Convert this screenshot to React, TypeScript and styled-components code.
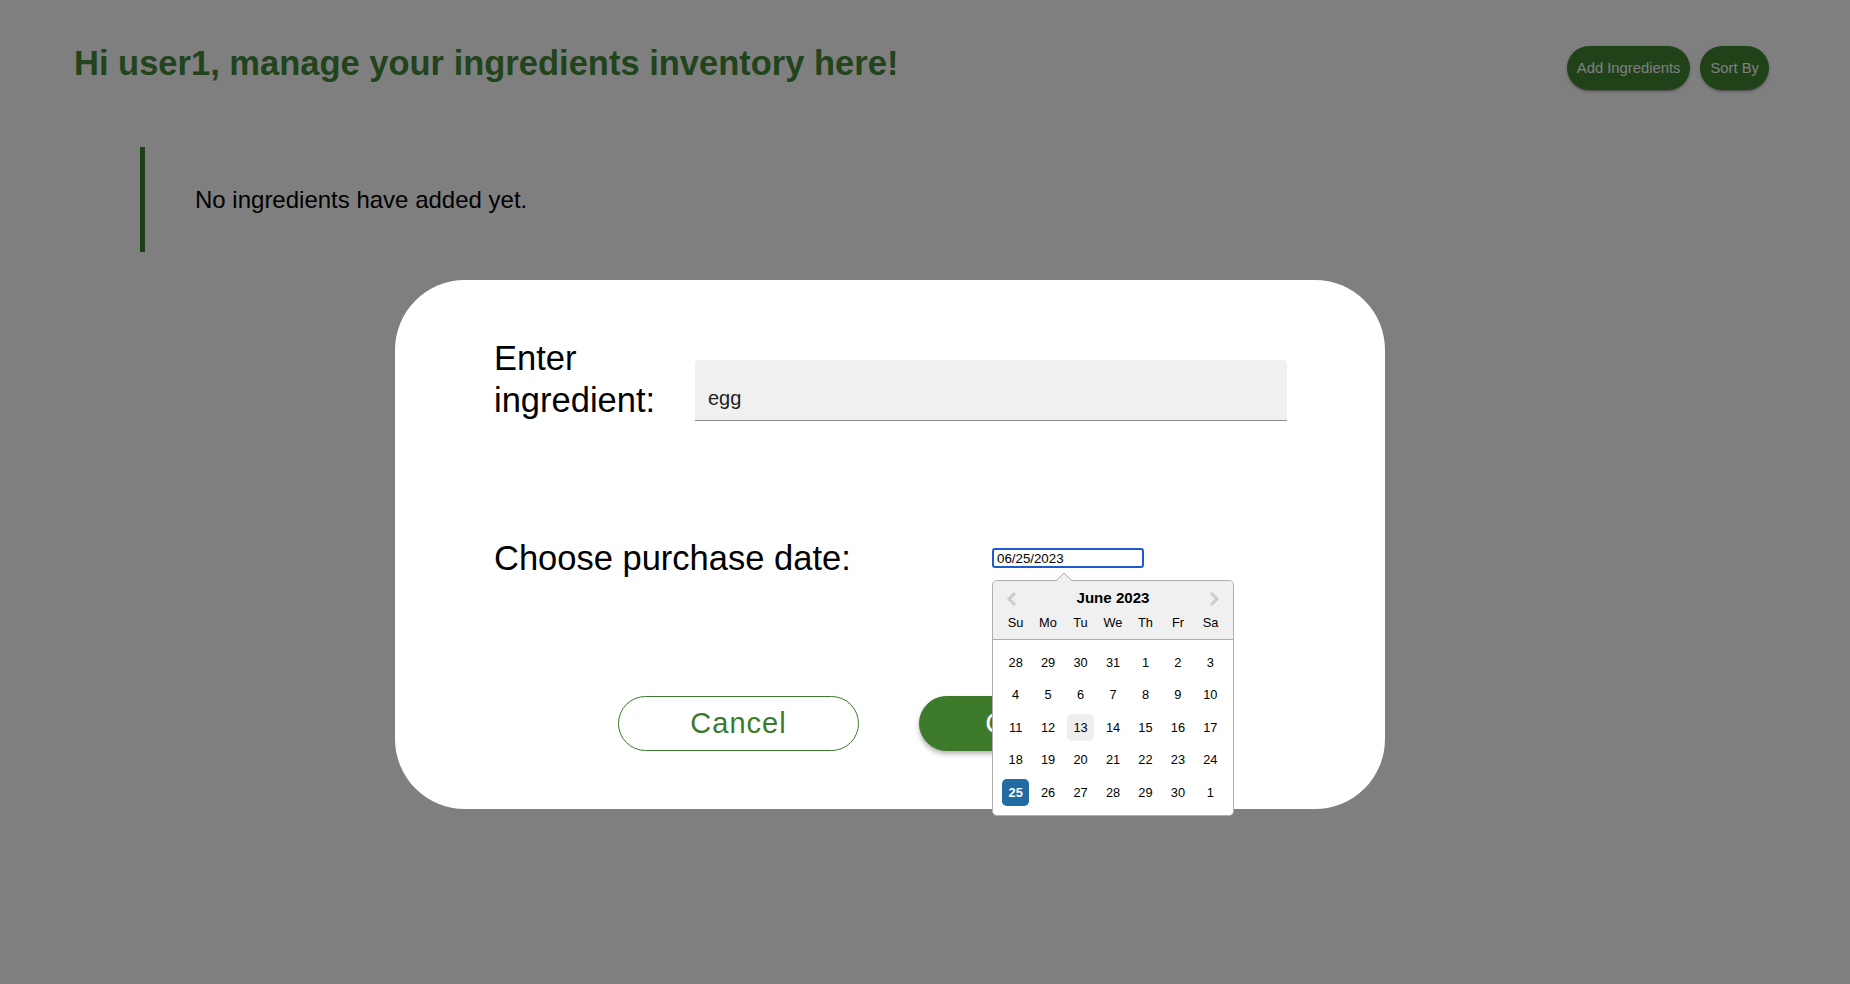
import React from 'react';
import styled, { createGlobalStyle } from 'styled-components';

const GREEN = '#3d7b2a';

const GlobalStyle = createGlobalStyle`
  html, body {
    margin: 0;
    padding: 0;
    background: #ffffff;
  }
  body {
    font-family: "Liberation Sans", Arial, sans-serif;
  }
`;

const Page = styled.div`
  min-height: 984px;
`;

const Header = styled.header`
  display: flex;
  justify-content: space-between;
  align-items: flex-start;
  padding: 43px 81px 0 74px;
`;

const Greeting = styled.h1`
  margin: 0;
  font-size: 34.5px;
  line-height: 40px;
  font-weight: 700;
  color: #44883a;
`;

const HeaderActions = styled.div`
  display: flex;
  gap: 10px;
  margin-top: 3px;
`;

const PillButton = styled.button`
  height: 44px;
  padding: 0 10px;
  border: none;
  border-radius: 22px;
  background: #3e8432;
  color: #ffffff;
  font-family: "Liberation Sans", Arial, sans-serif;
  font-size: 14.8px;
  box-shadow: 0 3px 1px -2px rgba(0, 0, 0, 0.2), 0 2px 2px rgba(0, 0, 0, 0.14), 0 1px 5px rgba(0, 0, 0, 0.12);
  cursor: pointer;
`;

const EmptyNote = styled.blockquote`
  margin: 57px 0 0 140px;
  height: 105px;
  border-left: 5px solid #3d8031;
  padding-left: 50px;
  display: flex;
  align-items: center;
  font-size: 24px;
  color: #000000;
`;

// backdrop of the dialog
const Backdrop = styled.div`
  position: fixed;
  inset: 0;
  background: rgba(0, 0, 0, 0.5);
  display: flex;
  align-items: flex-start;
  padding: 280px 0 0 395px;
`;

const Dialog = styled.div`
  width: 990px;
  height: 529px;
  box-sizing: border-box;
  background: #ffffff;
  border-radius: 70px;
  padding: 57px 98px 58px 99px;
  display: flex;
  flex-direction: column;
`;

const FieldRow = styled.div<{ $align: string; $gap: number }>`
  display: flex;
  align-items: ${p => p.$align};
  margin-top: ${p => p.$gap}px;
`;

const FieldLabel = styled.label<{ $width: number }>`
  flex: 0 0 ${p => p.$width}px;
  font-size: 34.5px;
  line-height: 42px;
  color: #000000;
`;

const TextInput = styled.input`
  width: 592px;
  height: 61px;
  box-sizing: border-box;
  border: none;
  border-bottom: 1px solid #8c8c8c;
  border-radius: 4px 4px 0 0;
  background: #f0f0f0;
  padding: 26px 12px 10px 13px;
  font-family: "Liberation Sans", Arial, sans-serif;
  font-size: 20px;
  color: #222222;
  outline: none;
`;

const DateField = styled.div`
  position: relative;
`;

const DateInput = styled.input`
  width: 152px;
  height: 20px;
  box-sizing: border-box;
  border: 2px solid #1f5bcc;
  border-radius: 3px;
  padding: 0 3px;
  font-family: "Liberation Sans", Arial, sans-serif;
  font-size: 13.3px;
  color: #000000;
  outline: none;
`;

const Popper = styled.div`
  position: absolute;
  top: 32px;
  left: 0;
  width: 242px;
  box-sizing: border-box;
  background: #ffffff;
  border: 1px solid #aeaeae;
  border-radius: 4.8px;
  font-size: 12.8px;
  color: #000000;
  z-index: 2;
`;

const PopperArrow = styled.svg`
  position: absolute;
  top: -9px;
  left: 62px;
`;

const CalHeader = styled.div`
  position: relative;
  background: #f0f0f0;
  border-bottom: 1px solid #aeaeae;
  border-radius: 4.8px 4.8px 0 0;
  padding: 8px 0;
  text-align: center;
`;

const MonthTitle = styled.div`
  font-size: 15.1px;
  font-weight: 700;
  line-height: 17.4px;
`;

const NavButton = styled.button<{ $side: 'left' | 'right' }>`
  position: absolute;
  top: 2px;
  ${p => p.$side}: 3px;
  width: 32px;
  height: 32px;
  padding: 0;
  border: none;
  background: none;
  display: flex;
  align-items: center;
  justify-content: center;
  cursor: pointer;
`;

const Week = styled.div<{ $header?: boolean }>`
  display: flex;
  justify-content: center;
  margin-bottom: ${p => (p.$header ? '-8px' : '0')};
`;

const Month = styled.div`
  margin: 6.4px;
`;

const Cell = styled.div<{ $state?: 'selected' | 'keyboard' }>`
  width: 27.2px;
  height: 27.2px;
  line-height: 27.2px;
  margin: 2.66px;
  text-align: center;
  border-radius: 4.8px;
  background: ${p => (p.$state === 'selected' ? '#216ba5' : p.$state === 'keyboard' ? '#eeeeee' : 'transparent')};
  color: ${p => (p.$state === 'selected' ? '#ffffff' : '#000000')};
  font-weight: ${p => (p.$state === 'selected' ? 700 : 400)};
`;

const ButtonRow = styled.div`
  display: flex;
  justify-content: center;
  gap: 60px;
  margin-top: 117px;
  padding-right: 3px;
`;

const DialogButton = styled.button<{ $filled?: boolean }>`
  width: 241px;
  height: 55px;
  border-radius: 28px;
  border: 1px solid ${GREEN};
  background: ${p => (p.$filled ? GREEN : '#ffffff')};
  color: ${p => (p.$filled ? '#ffffff' : GREEN)};
  box-shadow: ${p => (p.$filled ? '0 3px 5px rgba(0, 0, 0, 0.3)' : 'none')};
  font-family: "Liberation Sans", Arial, sans-serif;
  font-size: 29px;
  letter-spacing: 1px;
  cursor: pointer;
`;

const dayNames = ['Su', 'Mo', 'Tu', 'We', 'Th', 'Fr', 'Sa'];
const weeks = [
  [28, 29, 30, 31, 1, 2, 3],
  [4, 5, 6, 7, 8, 9, 10],
  [11, 12, 13, 14, 15, 16, 17],
  [18, 19, 20, 21, 22, 23, 24],
  [25, 26, 27, 28, 29, 30, 1],
];

const Chevron = ({ dir }: { dir: 'left' | 'right' }) => (
  <svg width="12" height="16" viewBox="0 0 12 16">
    <polyline
      points={dir === 'left' ? '9,2 3,8 9,14' : '3,2 9,8 3,14'}
      fill="none"
      stroke="#cccccc"
      strokeWidth="3"
    />
  </svg>
);

const Calendar: React.FC = () => (
  <Popper>
    <PopperArrow width="18" height="10" viewBox="0 0 18 10">
      <polygon points="0,10 9,1 18,10" fill="#f0f0f0" />
      <polyline points="0,10 9,1 18,10" fill="none" stroke="#aeaeae" strokeWidth="1" />
    </PopperArrow>
    <CalHeader>
      <NavButton $side="left" aria-label="Previous Month">
        <Chevron dir="left" />
      </NavButton>
      <MonthTitle>June 2023</MonthTitle>
      <NavButton $side="right" aria-label="Next Month">
        <Chevron dir="right" />
      </NavButton>
      <Week $header>
        {dayNames.map(d => (
          <Cell key={d}>{d}</Cell>
        ))}
      </Week>
    </CalHeader>
    <Month>
      {weeks.map((week, wi) => (
        <Week key={wi}>
          {week.map((day, di) => {
            let state: 'selected' | 'keyboard' | undefined;
            if (wi === 4 && di === 0) state = 'selected';
            if (wi === 2 && day === 13) state = 'keyboard';
            return (
              <Cell key={di} $state={state}>
                {day}
              </Cell>
            );
          })}
        </Week>
      ))}
    </Month>
  </Popper>
);

const App: React.FC = () => {
  return (
    <Page>
      <GlobalStyle />
      <Header>
        <Greeting>Hi user1, manage your ingredients inventory here!</Greeting>
        <HeaderActions>
          <PillButton>Add Ingredients</PillButton>
          <PillButton>Sort By</PillButton>
        </HeaderActions>
      </Header>
      <EmptyNote>No ingredients have added yet.</EmptyNote>

      <Backdrop>
        <Dialog>
          <FieldRow $align="flex-end" $gap={0}>
            <FieldLabel $width={201}>Enter ingredient:</FieldLabel>
            <TextInput defaultValue="egg" />
          </FieldRow>
          <FieldRow $align="center" $gap={116}>
            <FieldLabel $width={498}>Choose purchase date:</FieldLabel>
            <DateField>
              <DateInput defaultValue="06/25/2023" />
              <Calendar />
            </DateField>
          </FieldRow>
          <ButtonRow>
            <DialogButton>Cancel</DialogButton>
            <DialogButton $filled>Confirm</DialogButton>
          </ButtonRow>
        </Dialog>
      </Backdrop>
    </Page>
  );
};

export default App;
